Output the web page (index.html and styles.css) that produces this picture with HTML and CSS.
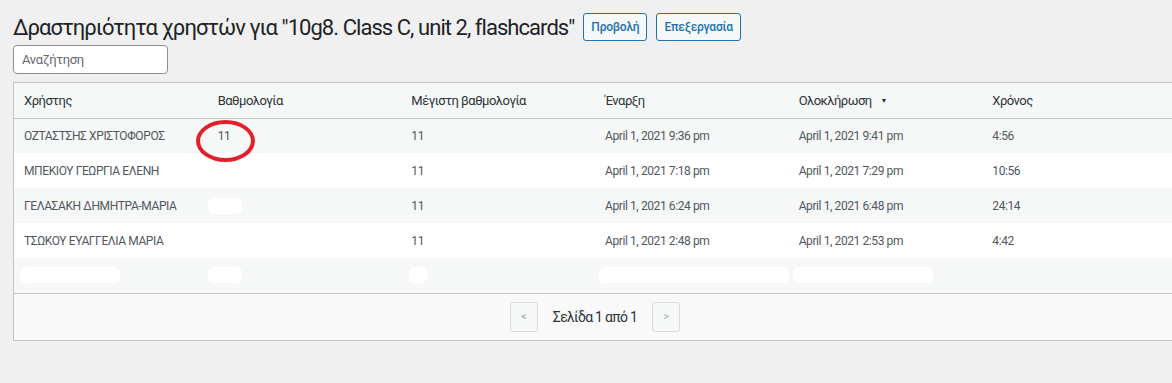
FILE: index.html
```html
<!DOCTYPE html>
<html lang="el">
<head>
    <meta charset="UTF-8">
    <meta name="viewport" content="width=device-width, initial-scale=1.0">
    <title>Δραστηριότητα χρηστών</title>
    <link rel="stylesheet" href="styles.css">
</head>
<body>
    <div class="wrap">
        <div class="title-row">
            <h1>Δραστηριότητα χρηστών για "10g8. Class C, unit 2, flashcards"</h1>
            <a class="btn" href="#">Προβολή</a>
            <a class="btn" href="#">Επεξεργασία</a>
        </div>
        <input class="search" type="text" placeholder="Αναζήτηση">

        <div class="panel">
            <table class="results">
                <thead>
                    <tr>
                        <th>Χρήστης</th>
                        <th>Βαθμολογία</th>
                        <th>Μέγιστη βαθμολογία</th>
                        <th>Έναρξη</th>
                        <th>Ολοκλήρωση <span class="sort">▼</span></th>
                        <th>Χρόνος</th>
                    </tr>
                </thead>
                <tbody>
                    <tr>
                        <td>ΟΖΤΑΣΤΣΗΣ ΧΡΙΣΤΟΦΟΡΟΣ</td>
                        <td class="marked">11<span class="circle"></span></td>
                        <td>11</td>
                        <td>April 1, 2021 9:36 pm</td>
                        <td>April 1, 2021 9:41 pm</td>
                        <td>4:56</td>
                    </tr>
                    <tr>
                        <td>ΜΠΕΚΙΟΥ ΓΕΩΡΓΙΑ ΕΛΕΝΗ</td>
                        <td></td>
                        <td>11</td>
                        <td>April 1, 2021 7:18 pm</td>
                        <td>April 1, 2021 7:29 pm</td>
                        <td>10:56</td>
                    </tr>
                    <tr>
                        <td>ΓΕΛΑΣΑΚΗ ΔΗΜΗΤΡΑ-ΜΑΡΙΑ</td>
                        <td><span class="blot b-small"></span></td>
                        <td>11</td>
                        <td>April 1, 2021 6:24 pm</td>
                        <td>April 1, 2021 6:48 pm</td>
                        <td>24:14</td>
                    </tr>
                    <tr>
                        <td>ΤΣΩΚΟΥ ΕΥΑΓΓΕΛΙΑ ΜΑΡΙΑ</td>
                        <td></td>
                        <td>11</td>
                        <td>April 1, 2021 2:48 pm</td>
                        <td>April 1, 2021 2:53 pm</td>
                        <td>4:42</td>
                    </tr>
                    <tr class="hidden-row">
                        <td><span class="blot b-name"></span></td>
                        <td><span class="blot b-small"></span></td>
                        <td><span class="blot b-tiny"></span></td>
                        <td><span class="blot b-wide"></span></td>
                        <td><span class="blot b-wide2"></span></td>
                        <td></td>
                    </tr>
                </tbody>
            </table>
            <div class="pager">
                <button class="page-btn">&lt;</button>
                <span class="page-info">Σελίδα 1 από 1</span>
                <button class="page-btn">&gt;</button>
            </div>
        </div>
    </div>
</body>
</html>
```

FILE: styles.css
```css
body {
    margin: 0;
    background-color: #f0f0f1;
    font-family: Roboto, "Noto Sans", sans-serif;
    color: #2c3338;
    overflow: hidden;
}

.wrap {
    padding: 13px 0 0 13px;
    width: 1164px;
}

.title-row {
    display: flex;
    align-items: center;
    gap: 9px;
}

h1 {
    margin: 0;
    font-size: 22px;
    font-weight: 400;
    color: #1d2327;
    letter-spacing: -0.95px;
}

.btn {
    display: inline-block;
    padding: 0 7px;
    height: 26px;
    line-height: 26px;
    font-size: 12px;
    font-weight: 500;
    letter-spacing: -0.2px;
    color: #2271b1;
    text-decoration: none;
    background: #f6f7f7;
    border: 1px solid #2271b1;
    border-radius: 3px;
}

.search {
    display: block;
    margin-top: 4px;
    width: 155px;
    height: 29px;
    box-sizing: border-box;
    padding: 0 8px;
    font-family: Roboto, sans-serif;
    font-size: 13px;
    letter-spacing: -0.3px;
    border: 1px solid #8c8f94;
    border-radius: 4px;
    background: #fff;
    color: #2c3338;
}

.search::placeholder {
    color: #646970;
}

.panel {
    margin-top: 8px;
    border: 1px solid #c3c4c7;
    background: #f9f9f9;
}

.results {
    width: 100%;
    border-collapse: collapse;
    table-layout: fixed;
}

.results th,
.results td {
    text-align: left;
    padding: 0 10px;
    height: 35px;
    box-sizing: border-box;
}

.results th {
    font-size: 13px;
    font-weight: 400;
    letter-spacing: -0.5px;
    color: #2c3338;
    background: #f6f7f7;
    border-bottom: 1px solid #c3c4c7;
}

.results td {
    font-size: 12px;
    letter-spacing: -0.4px;
    color: #50575e;
    white-space: nowrap;
}

.results tbody tr:nth-child(odd) {
    background: #f6f7f7;
}

.results tbody tr:nth-child(even) {
    background: #fff;
}

.results tbody tr:last-child td {
    border-bottom: 1px solid #c3c4c7;
}

.sort {
    font-size: 7px;
    margin-left: 6px;
    vertical-align: 2px;
}

.marked {
    position: relative;
}

.circle {
    position: absolute;
    left: -12px;
    top: 1px;
    width: 51px;
    height: 34px;
    border: 4px solid #e3202a;
    border-radius: 50%;
}

.blot {
    display: inline-block;
    height: 16px;
    background: #fff;
    border-radius: 6px;
    vertical-align: middle;
}

.b-small { width: 34px; margin-left: -10px; }
.b-name { width: 100px; margin-left: -4px; }
.b-tiny { width: 18px; margin-left: -2px; }
.b-wide { width: 190px; margin-left: -6px; }
.b-wide2 { width: 140px; margin-left: -6px; }

.pager {
    height: 46px;
    display: flex;
    align-items: center;
    justify-content: center;
    gap: 15px;
}

.page-btn {
    width: 28px;
    height: 30px;
    border: 1px solid #dcdcde;
    border-radius: 3px;
    background: #f6f7f7;
    color: #a7aaad;
    font-family: Roboto, sans-serif;
    font-size: 11px;
    padding: 0;
}

.page-info {
    font-size: 14px;
    letter-spacing: -0.7px;
    color: #2c3338;
}
```
